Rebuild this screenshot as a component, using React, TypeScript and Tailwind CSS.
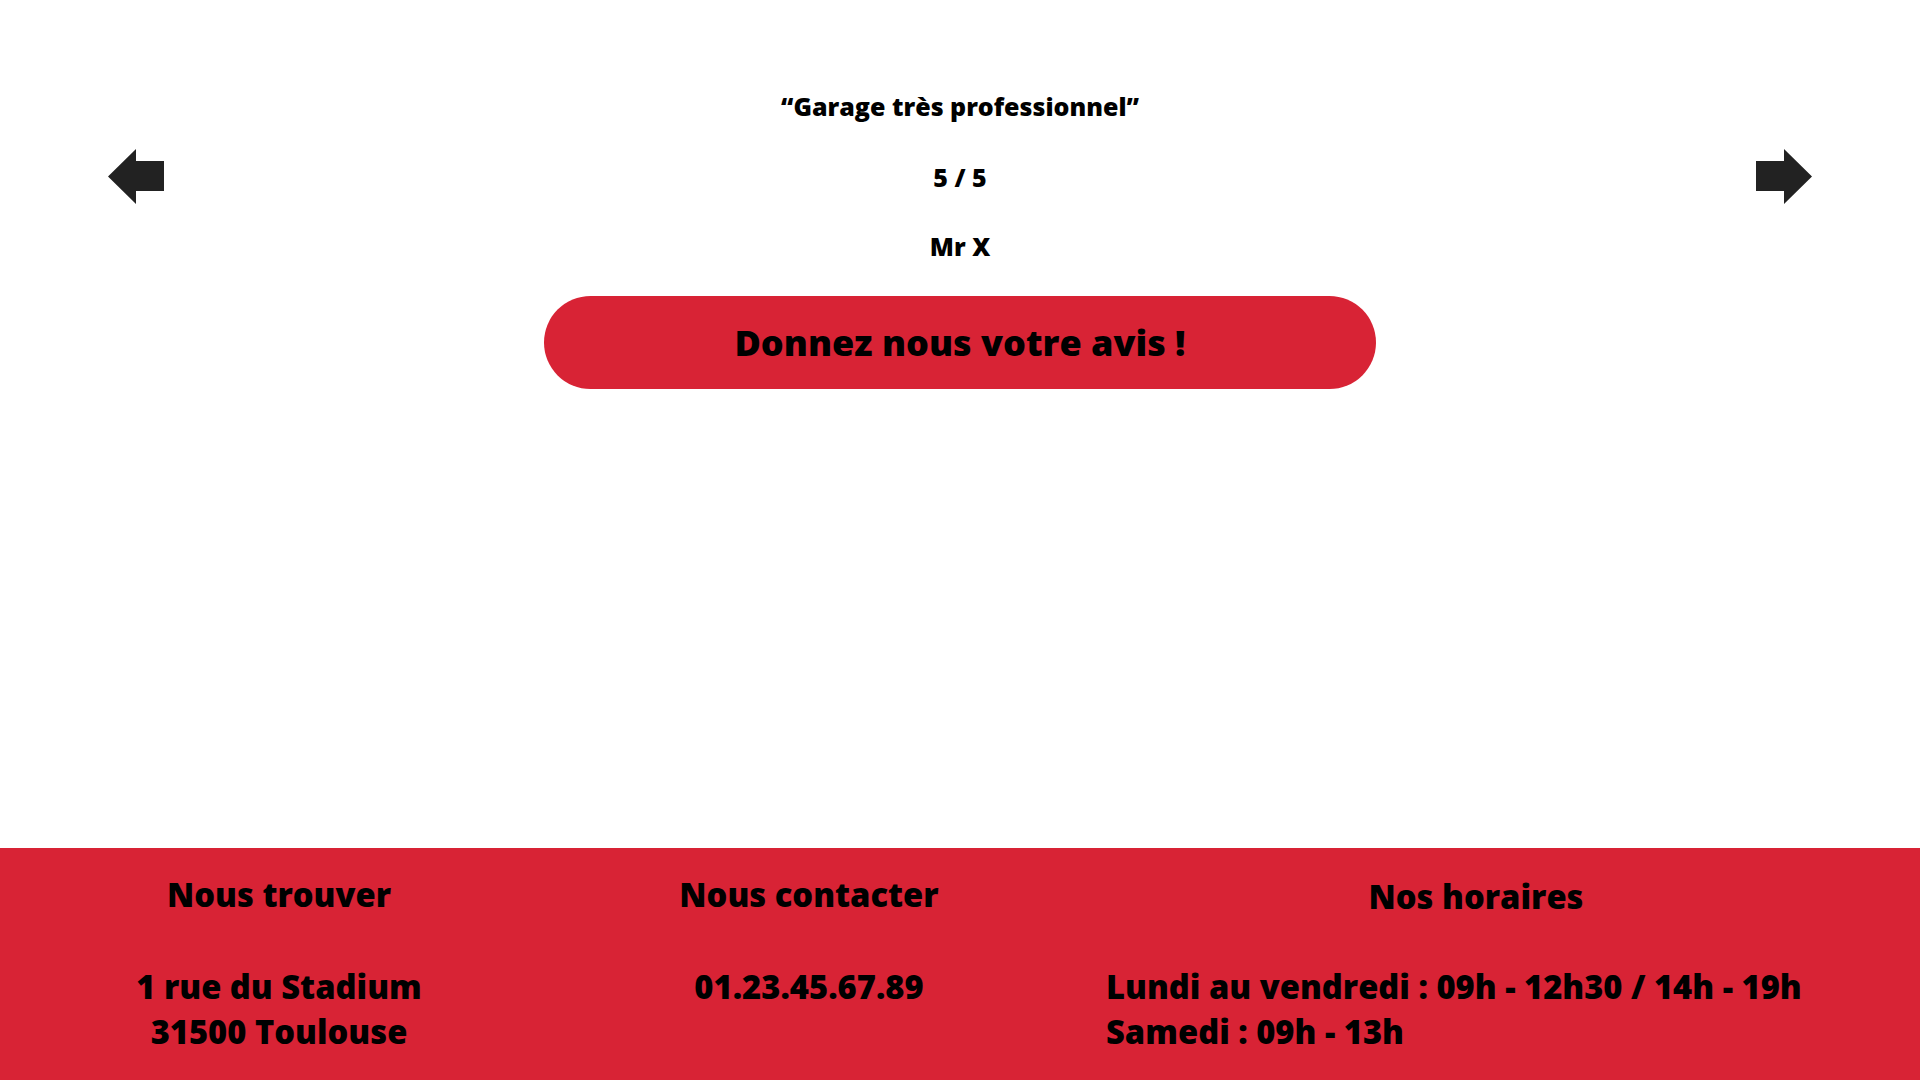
const font = { fontFamily: '"Open Sans", "Liberation Sans", sans-serif' };

function ArrowLeft() {
  return (
    <svg width="56" height="55" viewBox="0 0 56 55" className="block">
      <polygon points="0,27.5 28,0 28,12 56,12 56,42 28,42 28,55" fill="#222222" />
    </svg>
  );
}

function ArrowRight() {
  return (
    <svg width="56" height="55" viewBox="0 0 56 55" className="block">
      <polygon points="56,27.5 28,0 28,12 0,12 0,42 28,42 28,55" fill="#222222" />
    </svg>
  );
}

export default function App() {
  return (
    <div className="w-full min-h-screen bg-white text-black" style={font}>
      {/* avis clients */}
      <section className="h-[848px] pt-[88px]">
        <div className="flex items-center justify-between px-[108px]">
          <button className="cursor-pointer">
            <ArrowLeft />
          </button>
          <div className="flex flex-col items-center text-[25px] leading-[36px] font-extrabold">
            <p>“Garage très professionnel”</p>
            <p className="mt-[35px]">5 / 5</p>
            <p className="mt-[33px]">Mr X</p>
          </div>
          <button className="cursor-pointer">
            <ArrowRight />
          </button>
        </div>
        <div className="flex justify-center mt-[32px]">
          <button className="w-[832px] h-[93px] rounded-full bg-[#d82335] text-[36px] font-extrabold">
            Donnez nous votre avis !
          </button>
        </div>
      </section>

      {/* footer */}
      <footer className="h-[232px] bg-[#d82335] pt-[23px] grid grid-cols-[558px_502px_1fr] text-[32.7px] font-extrabold">
        <div className="flex flex-col items-center text-center">
          <h3 className="leading-[48px]">Nous trouver</h3>
          <p className="mt-[45px] leading-[45px]">
            1 rue du Stadium
            <br />
            31500 Toulouse
          </p>
        </div>
        <div className="flex flex-col items-center text-center">
          <h3 className="leading-[48px]">Nous contacter</h3>
          <p className="mt-[45px] leading-[45px]">01.23.45.67.89</p>
        </div>
        <div className="flex flex-col pl-[46px] pr-[74px]">
          <h3 className="leading-[48px] text-center pt-[2px]">Nos horaires</h3>
          <p className="mt-[43px] leading-[45px]">
            Lundi au vendredi : 09h - 12h30 / 14h - 19h
            <br />
            Samedi : 09h - 13h
          </p>
        </div>
      </footer>
    </div>
  );
}
